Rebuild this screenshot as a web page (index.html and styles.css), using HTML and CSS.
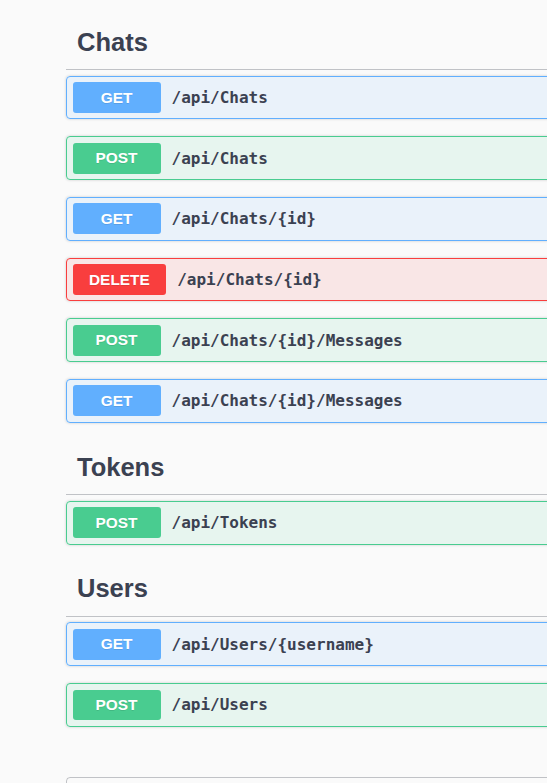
FILE: index.html
```html
<!DOCTYPE html>
<html>
<head>
<meta charset="utf-8">
<link rel="stylesheet" href="styles.css">
</head>
<body>
<div class="wrapper">
  <section class="tag-section">
    <h3 class="tag"><span>Chats</span></h3>
    <div class="opblock get"><span class="method">GET</span><span class="path">/api/Chats</span></div>
    <div class="opblock post"><span class="method">POST</span><span class="path">/api/Chats</span></div>
    <div class="opblock get"><span class="method">GET</span><span class="path">/api/Chats/{id}</span></div>
    <div class="opblock delete"><span class="method">DELETE</span><span class="path">/api/Chats/{id}</span></div>
    <div class="opblock post"><span class="method">POST</span><span class="path">/api/Chats/{id}/Messages</span></div>
    <div class="opblock get"><span class="method">GET</span><span class="path">/api/Chats/{id}/Messages</span></div>
  </section>
  <section class="tag-section">
    <h3 class="tag"><span>Tokens</span></h3>
    <div class="opblock post"><span class="method">POST</span><span class="path">/api/Tokens</span></div>
  </section>
  <section class="tag-section">
    <h3 class="tag"><span>Users</span></h3>
    <div class="opblock get"><span class="method">GET</span><span class="path">/api/Users/{username}</span></div>
    <div class="opblock post"><span class="method">POST</span><span class="path">/api/Users</span></div>
  </section>
  <section class="models"></section>
</div>
</body>
</html>
```

FILE: styles.css
```css
html, body {
  margin: 0;
  padding: 0;
  background: #fafafa;
  overflow: hidden;
}
.wrapper {
  width: 720px;
  margin-left: 66px;
  padding-top: 14.5px;
}
.tag-section {
  display: flex;
  flex-direction: column;
}
.tag {
  margin: 0 0 5.5px;
  padding: 11px 11px 11px 11px;
  line-height: 32.5px;
  font-family: "Liberation Sans", Arial, sans-serif;
  font-size: 25.5px;
  font-weight: 700;
  color: #3b4151;
  border-bottom: 1px solid rgba(59, 65, 81, 0.3);
}
.opblock {
  display: flex;
  align-items: center;
  margin: 0 0 16.8px;
  padding: 5.5px;
  border: 1px solid #000;
  border-radius: 4px;
  box-shadow: 0 0 3px rgba(0, 0, 0, 0.19);
}
.method {
  min-width: 88px;
  box-sizing: border-box;
  padding: 6.6px 16.5px;
  border-radius: 3px;
  text-align: center;
  font-family: "Liberation Sans", Arial, sans-serif;
  font-size: 15.4px;
  font-weight: 700;
  line-height: 17.7px;
  color: #fff;
  text-shadow: 0 1px 0 rgba(0, 0, 0, 0.1);
}
.path {
  padding: 0 11px;
  font-family: "DejaVu Sans Mono", "Liberation Mono", monospace;
  font-size: 16px;
  font-weight: 700;
  color: #3b4151;
}
.get { border-color: #61affe; background: rgba(97, 175, 254, 0.1); }
.get .method { background: #61affe; }
.post { border-color: #49cc90; background: rgba(73, 204, 144, 0.1); }
.post .method { background: #49cc90; }
.delete { border-color: #f93e3e; background: rgba(249, 62, 62, 0.1); }
.delete .method { background: #f93e3e; }
.models {
  margin: 33px 0;
  height: 60px;
  border: 1px solid rgba(59, 65, 81, 0.3);
  border-radius: 4px;
}
```
